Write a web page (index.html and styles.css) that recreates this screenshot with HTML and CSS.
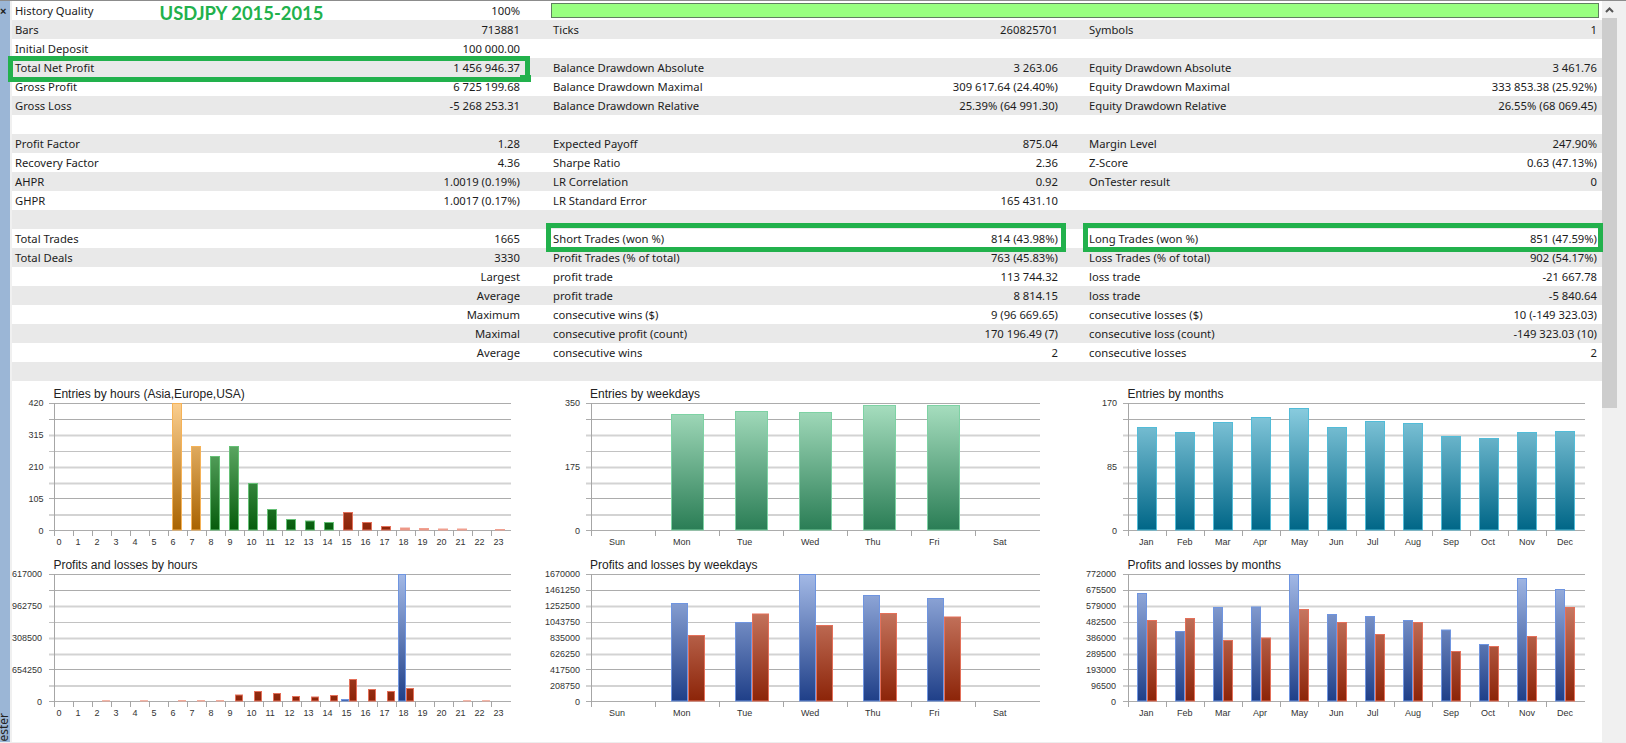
FILE: index.html
```html
<!DOCTYPE html>
<html lang="en">
<head>
<meta charset="utf-8">
<title>Strategy Tester Report</title>
<link rel="stylesheet" href="styles.css">
</head>
<body>
<svg class="defs" width="0" height="0" aria-hidden="true">
  <defs>
    <linearGradient id="gOrange" gradientUnits="userSpaceOnUse" x1="0" y1="403" x2="0" y2="530"><stop offset="0" stop-color="#fbcf90"/><stop offset="1" stop-color="#a96300"/></linearGradient>
    <linearGradient id="gGreen" gradientUnits="userSpaceOnUse" x1="0" y1="403" x2="0" y2="530"><stop offset="0" stop-color="#86cb8e"/><stop offset="1" stop-color="#065c0c"/></linearGradient>
    <linearGradient id="gRedUp" gradientUnits="userSpaceOnUse" x1="0" y1="403" x2="0" y2="530"><stop offset="0" stop-color="#d8917c"/><stop offset="1" stop-color="#8c2408"/></linearGradient>
    <linearGradient id="gMint" gradientUnits="userSpaceOnUse" x1="0" y1="403" x2="0" y2="530"><stop offset="0" stop-color="#a8dfc0"/><stop offset="1" stop-color="#2a7d55"/></linearGradient>
    <linearGradient id="gTeal" gradientUnits="userSpaceOnUse" x1="0" y1="403" x2="0" y2="530"><stop offset="0" stop-color="#8fd0e2"/><stop offset="1" stop-color="#006687"/></linearGradient>
    <linearGradient id="gBlue" gradientUnits="userSpaceOnUse" x1="0" y1="574" x2="0" y2="701"><stop offset="0" stop-color="#a3b9e6"/><stop offset="1" stop-color="#1f3f88"/></linearGradient>
    <linearGradient id="gRed" gradientUnits="userSpaceOnUse" x1="0" y1="574" x2="0" y2="701"><stop offset="0" stop-color="#dc9682"/><stop offset="1" stop-color="#8c2408"/></linearGradient>
  </defs>
</svg>
<div class="app">
  <aside class="strip">
    <span class="strip-close">×</span>
    <span class="strip-label">ester</span>
  </aside>
  <main class="report">
    <table class="stats">
      <colgroup><col class="c1"><col class="c2"><col class="c3"><col class="c4"><col class="c5"><col class="c6"></colgroup>
      <tbody>
        <tr><td class="l1">History Quality</td><td class="v1">100%</td><td colspan="4" class="barcell"><div class="quality"></div></td></tr>
        <tr><td class="l1">Bars</td><td class="v1">713881</td><td class="l2">Ticks</td><td class="v2">260825701</td><td class="l3">Symbols</td><td class="v3">1</td></tr>
        <tr><td class="l1">Initial Deposit</td><td class="v1">100 000.00</td><td class="l2"></td><td class="v2"></td><td class="l3"></td><td class="v3"></td></tr>
        <tr><td class="l1">Total Net Profit</td><td class="v1">1 456 946.37</td><td class="l2">Balance Drawdown Absolute</td><td class="v2">3 263.06</td><td class="l3">Equity Drawdown Absolute</td><td class="v3">3 461.76</td></tr>
        <tr><td class="l1">Gross Profit</td><td class="v1">6 725 199.68</td><td class="l2">Balance Drawdown Maximal</td><td class="v2">309 617.64 (24.40%)</td><td class="l3">Equity Drawdown Maximal</td><td class="v3">333 853.38 (25.92%)</td></tr>
        <tr><td class="l1">Gross Loss</td><td class="v1">-5 268 253.31</td><td class="l2">Balance Drawdown Relative</td><td class="v2">25.39% (64 991.30)</td><td class="l3">Equity Drawdown Relative</td><td class="v3">26.55% (68 069.45)</td></tr>
        <tr><td class="l1"></td><td class="v1"></td><td class="l2"></td><td class="v2"></td><td class="l3"></td><td class="v3"></td></tr>
        <tr><td class="l1">Profit Factor</td><td class="v1">1.28</td><td class="l2">Expected Payoff</td><td class="v2">875.04</td><td class="l3">Margin Level</td><td class="v3">247.90%</td></tr>
        <tr><td class="l1">Recovery Factor</td><td class="v1">4.36</td><td class="l2">Sharpe Ratio</td><td class="v2">2.36</td><td class="l3">Z-Score</td><td class="v3">0.63 (47.13%)</td></tr>
        <tr><td class="l1">AHPR</td><td class="v1">1.0019 (0.19%)</td><td class="l2">LR Correlation</td><td class="v2">0.92</td><td class="l3">OnTester result</td><td class="v3">0</td></tr>
        <tr><td class="l1">GHPR</td><td class="v1">1.0017 (0.17%)</td><td class="l2">LR Standard Error</td><td class="v2">165 431.10</td><td class="l3"></td><td class="v3"></td></tr>
        <tr><td class="l1"></td><td class="v1"></td><td class="l2"></td><td class="v2"></td><td class="l3"></td><td class="v3"></td></tr>
        <tr><td class="l1">Total Trades</td><td class="v1">1665</td><td class="l2">Short Trades (won %)</td><td class="v2">814 (43.98%)</td><td class="l3">Long Trades (won %)</td><td class="v3">851 (47.59%)</td></tr>
        <tr><td class="l1">Total Deals</td><td class="v1">3330</td><td class="l2">Profit Trades (% of total)</td><td class="v2">763 (45.83%)</td><td class="l3">Loss Trades (% of total)</td><td class="v3">902 (54.17%)</td></tr>
        <tr><td class="l1"></td><td class="v1">Largest</td><td class="l2">profit trade</td><td class="v2">113 744.32</td><td class="l3">loss trade</td><td class="v3">-21 667.78</td></tr>
        <tr><td class="l1"></td><td class="v1">Average</td><td class="l2">profit trade</td><td class="v2">8 814.15</td><td class="l3">loss trade</td><td class="v3">-5 840.64</td></tr>
        <tr><td class="l1"></td><td class="v1">Maximum</td><td class="l2">consecutive wins ($)</td><td class="v2">9 (96 669.65)</td><td class="l3">consecutive losses ($)</td><td class="v3">10 (-149 323.03)</td></tr>
        <tr><td class="l1"></td><td class="v1">Maximal</td><td class="l2">consecutive profit (count)</td><td class="v2">170 196.49 (7)</td><td class="l3">consecutive loss (count)</td><td class="v3">-149 323.03 (10)</td></tr>
        <tr><td class="l1"></td><td class="v1">Average</td><td class="l2">consecutive wins</td><td class="v2">2</td><td class="l3">consecutive losses</td><td class="v3">2</td></tr>
        <tr><td class="l1"></td><td class="v1"></td><td class="l2"></td><td class="v2"></td><td class="l3"></td><td class="v3"></td></tr>
      </tbody>
    </table>

    <div class="overlay-title">USDJPY 2015-2015</div>
    <div class="mark mark-profit"></div>
    <div class="mark mark-short"></div>
    <div class="mark mark-long"></div>

    <section class="charts">
      <!-- Entries by hours -->
      <svg class="chart" viewBox="12 381 538 171" width="538" height="171">
        <text class="ctitle" x="53.4" y="398">Entries by hours (Asia,Europe,USA)</text>
        <path class="gd" d="M49 403.5H511M49 419.5H511M49 498.5H511M49 530.5H511"/>
        <path class="gm" d="M49 451.5H511"/>
        <path class="gl" d="M49 435.5H511M49 467.5H511M49 483.5H511M49 515H511"/>
        <path class="ax" d="M54.5 403V536M73.5 530V536M92.5 530V536M111.5 530V536M130.5 530V536M149.5 530V536M168.5 530V536M187.5 530V536M206.5 530V536M225.5 530V536M244.5 530V536M263.5 530V536M282.5 530V536M301.5 530V536M320.5 530V536M339.5 530V536M358.5 530V536M377.5 530V536M396.5 530V536M415.5 530V536M434.5 530V536M453.5 530V536M472.5 530V536M491.5 530V536"/>
        <g fill="url(#gOrange)" stroke="#f5b257">
          <rect x="172.5" y="403.5" width="9" height="126.5"/><rect x="191.5" y="446.5" width="9" height="83.5"/>
        </g>
        <g fill="url(#gGreen)" stroke="#66c076">
          <rect x="210.5" y="456.5" width="9" height="73.5"/><rect x="229.5" y="446.5" width="9" height="83.5"/><rect x="248.5" y="483.5" width="9" height="46.5"/><rect x="267.5" y="509.5" width="9" height="20.5"/><rect x="286.5" y="519.5" width="9" height="10.5"/><rect x="305.5" y="521" width="9" height="9"/><rect x="324.5" y="522.5" width="9" height="7.5"/>
        </g>
        <g fill="url(#gRedUp)" stroke="#e2705a">
          <rect x="343.5" y="512.5" width="9" height="17.5"/><rect x="362.5" y="522.5" width="9" height="7.5"/><rect x="381.5" y="526.5" width="9" height="3.5"/>
        </g>
        <g fill="#ea8f7e" stroke="#f0a090">
          <rect x="400.5" y="528" width="9" height="2"/><rect x="419.5" y="528.5" width="9" height="1.5"/><rect x="438.5" y="529" width="9" height="1"/><rect x="457.5" y="529" width="9" height="1"/><rect x="495.5" y="529.5" width="9" height="0.5"/>
        </g>
        <g class="ylab"><text x="43.5" y="406">420</text><text x="43.5" y="438">315</text><text x="43.5" y="470">210</text><text x="43.5" y="502">105</text><text x="43.5" y="533.5">0</text></g>
        <g class="xlab"><text x="56.5" y="545">0</text><text x="75.5" y="545">1</text><text x="94.5" y="545">2</text><text x="113.5" y="545">3</text><text x="132.5" y="545">4</text><text x="151.5" y="545">5</text><text x="170.5" y="545">6</text><text x="189.5" y="545">7</text><text x="208.5" y="545">8</text><text x="227.5" y="545">9</text><text x="246.5" y="545">10</text><text x="265.5" y="545">11</text><text x="284.5" y="545">12</text><text x="303.5" y="545">13</text><text x="322.5" y="545">14</text><text x="341.5" y="545">15</text><text x="360.5" y="545">16</text><text x="379.5" y="545">17</text><text x="398.5" y="545">18</text><text x="417.5" y="545">19</text><text x="436.5" y="545">20</text><text x="455.5" y="545">21</text><text x="474.5" y="545">22</text><text x="493.5" y="545">23</text></g>
      </svg>

      <!-- Entries by weekdays -->
      <svg class="chart" viewBox="550 381 530 171" width="530" height="171">
        <text class="ctitle" x="590" y="398">Entries by weekdays</text>
        <path class="gd" d="M586 403.5H1040M586 419.5H1040M586 498.5H1040M586 530.5H1040"/>
        <path class="gm" d="M586 451.5H1040"/>
        <path class="gl" d="M586 435.5H1040M586 467.5H1040M586 483.5H1040M586 515H1040"/>
        <path class="ax" d="M591.5 403V536M655.5 530V536M719.5 530V536M783.5 530V536M847.5 530V536M911.5 530V536M975.5 530V536"/>
        <g fill="url(#gMint)" stroke="#7ed2a4">
          <rect x="671.5" y="414.5" width="32" height="115.5"/><rect x="735.5" y="411.5" width="32" height="118.5"/><rect x="799.5" y="412.5" width="32" height="117.5"/><rect x="863.5" y="405.5" width="32" height="124.5"/><rect x="927.5" y="405.5" width="32" height="124.5"/>
        </g>
        <g class="ylab"><text x="580" y="406">350</text><text x="580" y="470">175</text><text x="580" y="533.5">0</text></g>
        <g class="xlab"><text x="609" y="545">Sun</text><text x="673" y="545">Mon</text><text x="737" y="545">Tue</text><text x="801" y="545">Wed</text><text x="865" y="545">Thu</text><text x="929" y="545">Fri</text><text x="993" y="545">Sat</text></g>
      </svg>

      <!-- Entries by months -->
      <svg class="chart" viewBox="1080 381 522 171" width="522" height="171">
        <text class="ctitle" x="1127.5" y="398">Entries by months</text>
        <path class="gd" d="M1123 403.5H1585M1123 419.5H1585M1123 498.5H1585M1123 530.5H1585"/>
        <path class="gm" d="M1123 451.5H1585"/>
        <path class="gl" d="M1123 435.5H1585M1123 467.5H1585M1123 483.5H1585M1123 515H1585"/>
        <path class="ax" d="M1128.5 403V536M1166.5 530V536M1204.5 530V536M1242.5 530V536M1280.5 530V536M1318.5 530V536M1356.5 530V536M1394.5 530V536M1432.5 530V536M1470.5 530V536M1508.5 530V536M1546.5 530V536"/>
        <g fill="url(#gTeal)" stroke="#52bcd8">
          <rect x="1137.5" y="427.5" width="19" height="102.5"/><rect x="1175.5" y="432.5" width="19" height="97.5"/><rect x="1213.5" y="422.5" width="19" height="107.5"/><rect x="1251.5" y="417.5" width="19" height="112.5"/><rect x="1289.5" y="408.5" width="19" height="121.5"/><rect x="1327.5" y="427.5" width="19" height="102.5"/><rect x="1365.5" y="421.5" width="19" height="108.5"/><rect x="1403.5" y="423.5" width="19" height="106.5"/><rect x="1441.5" y="436.5" width="19" height="93.5"/><rect x="1479.5" y="438.5" width="19" height="91.5"/><rect x="1517.5" y="432.5" width="19" height="97.5"/><rect x="1555.5" y="431.5" width="19" height="98.5"/>
        </g>
        <g class="ylab"><text x="1117" y="406">170</text><text x="1117" y="470">85</text><text x="1117" y="533.5">0</text></g>
        <g class="xlab"><text x="1139" y="545">Jan</text><text x="1177" y="545">Feb</text><text x="1215" y="545">Mar</text><text x="1253" y="545">Apr</text><text x="1291" y="545">May</text><text x="1329" y="545">Jun</text><text x="1367" y="545">Jul</text><text x="1405" y="545">Aug</text><text x="1443" y="545">Sep</text><text x="1481" y="545">Oct</text><text x="1519" y="545">Nov</text><text x="1557" y="545">Dec</text></g>
      </svg>

      <!-- Profits and losses by hours -->
      <svg class="chart" viewBox="12 552 538 171" width="538" height="171">
        <text class="ctitle" x="53.4" y="569">Profits and losses by hours</text>
        <path class="gd" d="M49 574.5H511M49 590.5H511M49 669.5H511M49 701.5H511"/>
        <path class="gm" d="M49 622.5H511"/>
        <path class="gl" d="M49 606.5H511M49 638.5H511M49 654.5H511M49 686H511"/>
        <path class="ax" d="M54.5 574V707M73.5 701V707M92.5 701V707M111.5 701V707M130.5 701V707M149.5 701V707M168.5 701V707M187.5 701V707M206.5 701V707M225.5 701V707M244.5 701V707M263.5 701V707M282.5 701V707M301.5 701V707M320.5 701V707M339.5 701V707M358.5 701V707M377.5 701V707M396.5 701V707M415.5 701V707M434.5 701V707M453.5 701V707M472.5 701V707M491.5 701V707"/>
        <g fill="url(#gBlue)" stroke="#6f95e0">
          <rect x="341.5" y="699.5" width="7" height="1.5"/><rect x="398.5" y="574.5" width="7" height="126.5"/>
        </g>
        <g fill="url(#gRed)" stroke="#e4705a">
          <rect x="235.5" y="695" width="7" height="6"/><rect x="254.5" y="691.5" width="7" height="9.5"/><rect x="273.5" y="693.5" width="7" height="7.5"/><rect x="292.5" y="696.5" width="7" height="4.5"/><rect x="311.5" y="697" width="7" height="4"/><rect x="330.5" y="695.5" width="7" height="5.5"/><rect x="349.5" y="679.5" width="7" height="21.5"/><rect x="368.5" y="689.5" width="7" height="11.5"/><rect x="387.5" y="691.5" width="7" height="9.5"/><rect x="406.5" y="688.5" width="7" height="12.5"/>
        </g>
        <g fill="#ee9c8a" stroke="#f3ab9b">
          <rect x="102.5" y="700.7" width="7" height="0.3"/><rect x="140.5" y="700.7" width="7" height="0.3"/><rect x="178.5" y="700.5" width="7" height="0.5"/><rect x="197.5" y="700.5" width="7" height="0.5"/><rect x="216.5" y="700.5" width="7" height="0.5"/><rect x="463.5" y="700.7" width="7" height="0.3"/><rect x="482.5" y="700.7" width="7" height="0.3"/>
        </g>
        <g class="ylab"><text x="42" y="577">617000</text><text x="42" y="609">962750</text><text x="42" y="641">308500</text><text x="42" y="673">654250</text><text x="42" y="704.5">0</text></g>
        <g class="xlab"><text x="56.5" y="716">0</text><text x="75.5" y="716">1</text><text x="94.5" y="716">2</text><text x="113.5" y="716">3</text><text x="132.5" y="716">4</text><text x="151.5" y="716">5</text><text x="170.5" y="716">6</text><text x="189.5" y="716">7</text><text x="208.5" y="716">8</text><text x="227.5" y="716">9</text><text x="246.5" y="716">10</text><text x="265.5" y="716">11</text><text x="284.5" y="716">12</text><text x="303.5" y="716">13</text><text x="322.5" y="716">14</text><text x="341.5" y="716">15</text><text x="360.5" y="716">16</text><text x="379.5" y="716">17</text><text x="398.5" y="716">18</text><text x="417.5" y="716">19</text><text x="436.5" y="716">20</text><text x="455.5" y="716">21</text><text x="474.5" y="716">22</text><text x="493.5" y="716">23</text></g>
      </svg>

      <!-- Profits and losses by weekdays -->
      <svg class="chart" viewBox="550 552 530 171" width="530" height="171">
        <text class="ctitle" x="590" y="569">Profits and losses by weekdays</text>
        <path class="gd" d="M586 574.5H1040M586 590.5H1040M586 669.5H1040M586 701.5H1040"/>
        <path class="gm" d="M586 622.5H1040"/>
        <path class="gl" d="M586 606.5H1040M586 638.5H1040M586 654.5H1040M586 686H1040"/>
        <path class="ax" d="M591.5 574V707M655.5 701V707M719.5 701V707M783.5 701V707M847.5 701V707M911.5 701V707M975.5 701V707"/>
        <g fill="url(#gBlue)" stroke="#6f95e0">
          <rect x="671.5" y="603.5" width="16" height="97.5"/><rect x="735.5" y="622.5" width="16" height="78.5"/><rect x="799.5" y="574.5" width="16" height="126.5"/><rect x="863.5" y="595.5" width="16" height="105.5"/><rect x="927.5" y="598.5" width="16" height="102.5"/>
        </g>
        <g fill="url(#gRed)" stroke="#e4705a">
          <rect x="688.5" y="635.5" width="16" height="65.5"/><rect x="752.5" y="614" width="16" height="87"/><rect x="816.5" y="625.5" width="16" height="75.5"/><rect x="880.5" y="613.5" width="16" height="87.5"/><rect x="944.5" y="617" width="16" height="84"/>
        </g>
        <g class="ylab"><text x="580" y="577">1670000</text><text x="580" y="593">1461250</text><text x="580" y="609">1252500</text><text x="580" y="625">1043750</text><text x="580" y="641">835000</text><text x="580" y="657">626250</text><text x="580" y="673">417500</text><text x="580" y="689">208750</text><text x="580" y="704.5">0</text></g>
        <g class="xlab"><text x="609" y="716">Sun</text><text x="673" y="716">Mon</text><text x="737" y="716">Tue</text><text x="801" y="716">Wed</text><text x="865" y="716">Thu</text><text x="929" y="716">Fri</text><text x="993" y="716">Sat</text></g>
      </svg>

      <!-- Profits and losses by months -->
      <svg class="chart" viewBox="1080 552 522 171" width="522" height="171">
        <text class="ctitle" x="1127.5" y="569">Profits and losses by months</text>
        <path class="gd" d="M1123 574.5H1585M1123 590.5H1585M1123 669.5H1585M1123 701.5H1585"/>
        <path class="gm" d="M1123 622.5H1585"/>
        <path class="gl" d="M1123 606.5H1585M1123 638.5H1585M1123 654.5H1585M1123 686H1585"/>
        <path class="ax" d="M1128.5 574V707M1166.5 701V707M1204.5 701V707M1242.5 701V707M1280.5 701V707M1318.5 701V707M1356.5 701V707M1394.5 701V707M1432.5 701V707M1470.5 701V707M1508.5 701V707M1546.5 701V707"/>
        <g fill="url(#gBlue)" stroke="#6f95e0">
          <rect x="1137.5" y="593.5" width="9" height="107.5"/><rect x="1175.5" y="631.5" width="9" height="69.5"/><rect x="1213.5" y="607.5" width="9" height="93.5"/><rect x="1251.5" y="607" width="9" height="94"/><rect x="1289.5" y="574.5" width="9" height="126.5"/><rect x="1327.5" y="614.5" width="9" height="86.5"/><rect x="1365.5" y="616.5" width="9" height="84.5"/><rect x="1403.5" y="620.5" width="9" height="80.5"/><rect x="1441.5" y="630" width="9" height="71"/><rect x="1479.5" y="644.5" width="9" height="56.5"/><rect x="1517.5" y="578.5" width="9" height="122.5"/><rect x="1555.5" y="589.5" width="9" height="111.5"/>
        </g>
        <g fill="url(#gRed)" stroke="#e4705a">
          <rect x="1147.5" y="620.5" width="9" height="80.5"/><rect x="1185.5" y="618.5" width="9" height="82.5"/><rect x="1223.5" y="640.5" width="9" height="60.5"/><rect x="1261.5" y="638" width="9" height="63"/><rect x="1299.5" y="609.5" width="9" height="91.5"/><rect x="1337.5" y="622.5" width="9" height="78.5"/><rect x="1375.5" y="634.5" width="9" height="66.5"/><rect x="1413.5" y="622.5" width="9" height="78.5"/><rect x="1451.5" y="651.5" width="9" height="49.5"/><rect x="1489.5" y="646.5" width="9" height="54.5"/><rect x="1527.5" y="636.5" width="9" height="64.5"/><rect x="1565.5" y="607.5" width="9" height="93.5"/>
        </g>
        <g class="ylab"><text x="1116" y="577">772000</text><text x="1116" y="593">675500</text><text x="1116" y="609">579000</text><text x="1116" y="625">482500</text><text x="1116" y="641">386000</text><text x="1116" y="657">289500</text><text x="1116" y="673">193000</text><text x="1116" y="689">96500</text><text x="1116" y="704.5">0</text></g>
        <g class="xlab"><text x="1139" y="716">Jan</text><text x="1177" y="716">Feb</text><text x="1215" y="716">Mar</text><text x="1253" y="716">Apr</text><text x="1291" y="716">May</text><text x="1329" y="716">Jun</text><text x="1367" y="716">Jul</text><text x="1405" y="716">Aug</text><text x="1443" y="716">Sep</text><text x="1481" y="716">Oct</text><text x="1519" y="716">Nov</text><text x="1557" y="716">Dec</text></g>
      </svg>
    </section>
  </main>
  <div class="scrollbar">
    <div class="scroll-up"><svg width="9" height="6" viewBox="0 0 9 6"><path d="M1 5L4.5 1.5L8 5" fill="none" stroke="#555" stroke-width="2"/></svg></div>
    <div class="scroll-thumb"></div>
  </div>
</div>
</body>
</html>
```

FILE: styles.css
```css
* { box-sizing: border-box; }
html, body { margin: 0; padding: 0; height: 100%; overflow: hidden; }
body { background: #f0f0f0; }
.defs { display: block; height: 0; }

.app {
  display: flex;
  width: 1626px;
  height: 743px;
  background: #f0f0f0;
  border-top: 1px solid #8c8c8c;
  border-bottom: 1px solid #eeeeee;
  overflow: hidden;
}

/* left docked panel edge */
.strip {
  position: relative;
  flex: 0 0 10px;
  margin-right: 2px;
  background: #9bb6d6;
  overflow: hidden;
}
.strip-close {
  position: absolute;
  left: 0;
  top: 3px;
  font: bold 11px/14px "Liberation Sans", sans-serif;
  color: #1a1a1a;
}
.strip-label {
  position: absolute;
  left: -2px;
  bottom: 0;
  writing-mode: vertical-rl;
  transform: rotate(180deg);
  font: 12px/12px "Noto Sans", sans-serif;
  color: #222;
}

.report {
  position: relative;
  flex: 0 0 1590px;
  background: #fff;
}

.stats {
  width: 1590px;
  table-layout: fixed;
  border-collapse: collapse;
  font: 11.25px/19px "Noto Sans", sans-serif;
  color: #1c1c1c;
}
.stats tr { height: 19px; }
.stats tr:nth-child(even) { background: #e9e9e9; }
.stats td { padding: 0; height: 19px; white-space: nowrap; overflow: hidden; }
.c1 { width: 288px; }
.c2 { width: 248px; }
.c3 { width: 252px; }
.c4 { width: 285px; }
.c5 { width: 265px; }
.c6 { width: 252px; }
.stats .l1 { padding-left: 3px; }
.stats .v1 { text-align: right; padding-right: 28px; }
.stats .l2 { padding-left: 5px; }
.stats .v2 { text-align: right; padding-right: 27px; }
.stats .l3 { padding-left: 4px; }
.stats .v3 { text-align: right; padding-right: 5px; }
.stats .barcell { padding: 2px 3px 1px 3px; vertical-align: top; }
.quality {
  height: 15px;
  background: #98ff80;
  border: 1px solid #5f7f5f;
}

.overlay-title {
  position: absolute;
  left: 147.5px;
  top: 0;
  font: bold 18.4px/24px Lato, sans-serif;
  color: #22b14c;
}

.mark {
  position: absolute;
  border: 5px solid #22b14c;
}
.mark-profit { left: -4px; top: 55px; width: 522px; height: 26px; }
.mark-profit::after {
  content: "";
  position: absolute;
  right: -6px;
  bottom: -5px;
  width: 11px;
  height: 7px;
  background: #22b14c;
}
.mark-short { left: 534px; top: 222px; width: 520px; height: 29px; }
.mark-long { left: 1071px; top: 222px; width: 520px; height: 29px; }

.charts {
  display: grid;
  grid-template-columns: 538px 530px 522px;
  grid-template-rows: 171px 171px;
}
.chart { display: block; overflow: visible; }
.ctitle { font: 12px "Liberation Sans", sans-serif; fill: #222; }
.gd, .gm, .gl { fill: none; }
.gd { stroke: #acacac; stroke-width: 1; }
.gm { stroke: #c2c2c2; stroke-width: 1; }
.gl { stroke: #d3d3d3; stroke-width: 2; }
.ax { fill: none; stroke: #a6a6a6; stroke-width: 1; }
.ylab text {
  font: 9px "Liberation Sans", sans-serif;
  fill: #333;
  text-anchor: end;
}
.xlab text {
  font: 9px "Liberation Sans", sans-serif;
  fill: #333;
}

.scrollbar {
  flex: 0 0 15px;
  margin-right: 9px;
  background: #f0f0f0;
  display: flex;
  flex-direction: column;
}
.scroll-up {
  height: 17px;
  display: flex;
  align-items: center;
  justify-content: center;
}
.scroll-thumb {
  height: 390px;
  background: #cdcdcd;
}
```
